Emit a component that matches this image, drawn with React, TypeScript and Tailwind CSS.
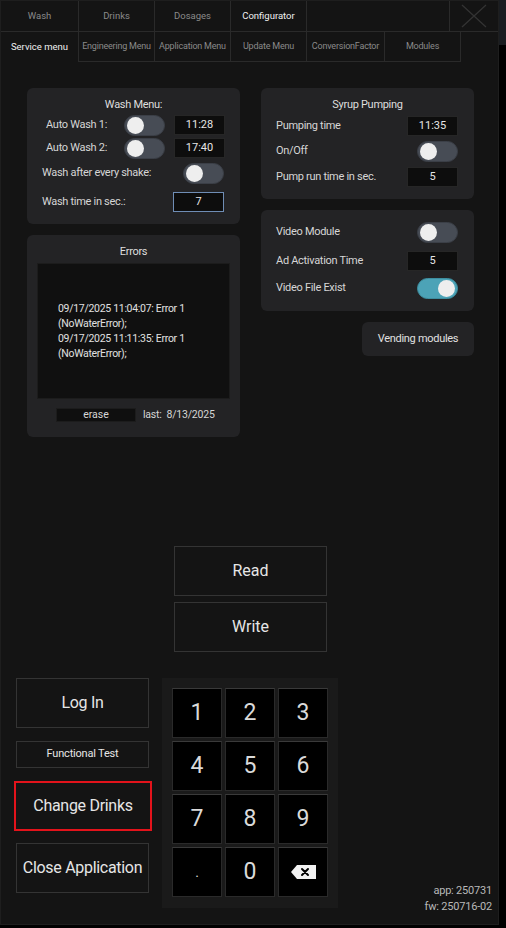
import type { ReactNode } from "react";

const FONT = "font-['Roboto','Liberation_Sans',sans-serif]";

type ToggleProps = { on?: boolean };

function Toggle({ on = false }: ToggleProps) {
  return (
    <div
      className={`flex h-[21px] w-[41px] shrink-0 items-center rounded-full border px-[2px] ${
        on ? "justify-end border-[#3d8ea0] bg-[#4ca3b7]" : "justify-start border-[#3b3f47] bg-[#474c55]"
      }`}
    >
      <div className="h-[17px] w-[17px] rounded-full bg-[#eeeeee]" />
    </div>
  );
}

function Field({ value, focused = false }: { value: string; focused?: boolean }) {
  return (
    <div
      className={`flex h-[20px] w-[51px] shrink-0 items-center justify-center border bg-[#0d0d0d] text-[11px] text-[#e6e6e6] ${
        focused ? "border-[#6f8db5]" : "border-[#262626]"
      }`}
    >
      {value}
    </div>
  );
}

function Card({ className = "", children }: { className?: string; children: ReactNode }) {
  return <div className={`flex flex-col rounded-[6px] bg-[#232325] ${className}`}>{children}</div>;
}

function Row({ label, children, className = "" }: { label: string; children: ReactNode; className?: string }) {
  return (
    <div className={`flex items-center justify-between pl-[15px] pr-[16px] ${className}`}>
      <span className="text-[11px] tracking-[-0.3px] text-[#d6d6d6]">{label}</span>
      {children}
    </div>
  );
}

const topTabs = [
  { label: "Wash", w: "w-[78px]" },
  { label: "Drinks", w: "w-[76px]" },
  { label: "Dosages", w: "w-[76px]" },
  { label: "Configurator", w: "w-[76px]", active: true },
];

const subTabs = [
  { label: "Engineering Menu", w: "w-[76px]" },
  { label: "Application Menu", w: "w-[76px]" },
  { label: "Update Menu", w: "w-[76px]" },
  { label: "ConversionFactor", w: "w-[78px]" },
  { label: "Modules", w: "w-[76px]" },
];

const keys = ["1", "2", "3", "4", "5", "6", "7", "8", "9", ".", "0", "del"];

function BackspaceIcon() {
  return (
    <svg width="25" height="14" viewBox="0 0 25 14">
      <path d="M0 7 L6 0 H25 V14 H6 Z" fill="#f2f2f2" />
      <path d="M11 4 L17 10 M17 4 L11 10" stroke="#000" strokeWidth="2" strokeLinecap="round" />
    </svg>
  );
}

function Keypad() {
  return (
    <div className="grid h-[230px] w-[176px] shrink-0 grid-cols-[50px_50px_50px] grid-rows-[50px_50px_50px_50px] gap-[3px] self-start bg-[#1a1a1a] px-[10px] pt-[10px]">
      {keys.map((k) => (
        <button
          key={k}
          type="button"
          className="flex items-center justify-center border border-[#2a2a2a] border-t-[#3a3a3a] bg-black text-[23px] text-[#dadada]"
        >
          {k === "del" ? <BackspaceIcon /> : k === "." ? <span className="text-[14px]">.</span> : k}
        </button>
      ))}
    </div>
  );
}

const btn = "flex items-center justify-center border border-[#343434] text-[#e6e6e6]";

export default function App() {
  return (
    <div className={`flex h-[928px] w-[506px] overflow-hidden bg-black ${FONT}`}>
      <div className="flex h-[925px] w-[499px] shrink-0 flex-col border border-[#1e1e1e] bg-[#141414]">
        {/* top tabs */}
        <div className="flex h-[31px] shrink-0 border-b border-[#2a2a2a]">
          {topTabs.map((t) => (
            <div
              key={t.label}
              className={`flex ${t.w} items-center justify-center border-r border-[#2a2a2a] text-[9.5px] ${
                t.active ? "text-[#f0f0f0]" : "text-[#8a8a8a]"
              }`}
            >
              {t.label}
            </div>
          ))}
          <div className="flex-1 border-r border-[#2a2a2a]" />
          <div className="flex w-[48px] items-center justify-center">
            <svg width="26" height="24" viewBox="0 0 26 24">
              <path d="M1 1 L25 23 M25 1 L1 23" stroke="#333333" strokeWidth="1.3" />
            </svg>
          </div>
        </div>
        <div className="flex h-[30px] shrink-0">
          <div className="flex w-[78px] items-center justify-center border-r border-[#2a2a2a] text-[9.5px] text-[#f0f0f0]">
            Service menu
          </div>
          {subTabs.map((t) => (
            <div
              key={t.label}
              className={`flex ${t.w} items-center justify-center border-r border-b border-[#2a2a2a] text-[9px] tracking-[-0.2px] text-[#8a8a8a]`}
            >
              {t.label}
            </div>
          ))}
        </div>

        {/* settings cards */}
        <div className="mt-[26px] grid grid-cols-[213px_213px] items-start gap-x-[21px] pl-[26px]">
          <div className="flex flex-col gap-[11px]">
            <Card className="h-[136px] pt-[10px]">
              <div className="flex h-[14px] items-center justify-center text-[11px] tracking-[-0.3px] text-[#dedede]">
                Wash Menu:
              </div>
              {["Auto Wash 1:", "Auto Wash 2:"].map((l, i) => (
                <div key={l} className="mt-[3px] flex h-[20px] items-center">
                  <span className="w-[80px] text-right text-[11px] tracking-[-0.3px] text-[#d6d6d6]">{l}</span>
                  <div className="ml-[17px]">
                    <Toggle />
                  </div>
                  <div className="ml-[9px]">
                    <Field value={i === 0 ? "11:28" : "17:40"} />
                  </div>
                </div>
              ))}
              <Row label="Wash after every shake:" className="mt-[5px] h-[21px] pr-[15px]">
                <Toggle />
              </Row>
              <Row label="Wash time in sec.:" className="mt-[8px] h-[20px]">
                <Field value="7" focused />
              </Row>
            </Card>

            <Card className="h-[202px] pt-[10px]">
              <div className="flex h-[14px] items-center justify-center text-[11px] tracking-[-0.3px] text-[#dedede]">
                Errors
              </div>
              <div className="mx-[10px] mt-[4px] flex h-[136px] flex-col justify-center border border-[#1c1c1c] bg-[#101010] pl-[20px] text-[10.5px] leading-[15px] tracking-[-0.3px] text-[#e0e0e0]">
                <span>09/17/2025 11:04:07: Error 1</span>
                <span>(NoWaterError);</span>
                <span>09/17/2025 11:11:35: Error 1</span>
                <span>(NoWaterError);</span>
              </div>
              <div className="mt-[9px] flex h-[14px] items-center pl-[29px]">
                <div className="flex h-[14px] w-[80px] items-center justify-center border border-[#1c1c1c] bg-[#0f0f0f] text-[10.5px] text-[#d6d6d6]">
                  erase
                </div>
                <span className="ml-[7px] whitespace-pre text-[10.5px] tracking-[-0.2px] text-[#d6d6d6]">
                  {"last:  8/13/2025"}
                </span>
              </div>
            </Card>
          </div>

          <div className="flex flex-col gap-[11px]">
            <Card className="h-[111px] pt-[10px]">
              <div className="flex h-[14px] items-center justify-center text-[11px] tracking-[-0.3px] text-[#dedede]">
                Syrup Pumping
              </div>
              <Row label="Pumping time" className="mt-[4px] h-[20px]">
                <Field value="11:35" />
              </Row>
              <Row label="On/Off" className="mt-[5px] h-[21px]">
                <Toggle />
              </Row>
              <Row label="Pump run time in sec." className="mt-[5px] h-[20px]">
                <Field value="5" />
              </Row>
            </Card>

            <Card className="h-[101px] pt-[12px]">
              <Row label="Video Module" className="h-[21px]">
                <Toggle />
              </Row>
              <Row label="Ad Activation Time" className="mt-[8px] h-[20px]">
                <Field value="5" />
              </Row>
              <Row label="Video File Exist" className="mt-[7px] h-[21px]">
                <Toggle on />
              </Row>
            </Card>

            <button
              type="button"
              className="flex h-[34px] w-[112px] items-center justify-center self-end rounded-[6px] bg-[#232325] text-[11px] tracking-[-0.3px] text-[#e0e0e0]"
            >
              Vending modules
            </button>
          </div>
        </div>

        {/* read / write */}
        <div className="ml-[173px] mt-[109px] flex w-[153px] flex-col gap-[6px]">
          {["Read", "Write"].map((l) => (
            <button key={l} type="button" className={`${btn} h-[50px] text-[16px]`}>
              {l}
            </button>
          ))}
        </div>

        {/* bottom area */}
        <div className="mt-[26px] flex h-[237px] shrink-0">
          <div className="ml-[15px] flex w-[133px] shrink-0 flex-col">
            <button type="button" className={`${btn} h-[50px] text-[16px] tracking-[-0.3px]`}>
              Log In
            </button>
            <button type="button" className={`${btn} mt-[13px] h-[27px] text-[11px] tracking-[-0.2px]`}>
              Functional Test
            </button>
            <button
              type="button"
              className="-ml-[2px] mt-[13px] flex h-[50px] w-[138px] items-center justify-center border-2 border-[#e3131b] text-[16px] tracking-[-0.3px] text-[#e6e6e6]"
            >
              Change Drinks
            </button>
            <button type="button" className={`${btn} mt-[12px] h-[50px] text-[16px] tracking-[-0.3px]`}>
              Close Application
            </button>
          </div>
          <div className="ml-[13px]">
            <Keypad />
          </div>
          <div className="flex flex-1 flex-col items-end justify-end pr-[6px] text-[11px] leading-[16px] tracking-[-0.2px] text-[#b8b8b8]">
            <span>app: 250731</span>
            <span>fw: 250716-02</span>
          </div>
        </div>
      </div>
      <div className="flex flex-1 flex-col">
        <div className="h-[45px] bg-[#1a1d21]" />
      </div>
    </div>
  );
}
